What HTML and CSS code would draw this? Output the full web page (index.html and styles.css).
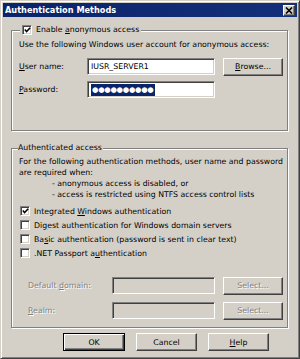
FILE: index.html
```html
<!DOCTYPE html>
<html>
<head>
<meta charset="utf-8">
<link rel="stylesheet" href="styles.css">
</head>
<body>
<div class="window">
  <div class="titlebar">
    <span class="title">Authentication Methods</span>
    <span class="close"><svg width="8" height="7" viewBox="0 0 8 7"><path d="M1 0.5 L7 6.5 M7 0.5 L1 6.5" stroke="#000" stroke-width="1.6"/></svg></span>
  </div>
  <div class="content">
    <fieldset class="group g1">
      <legend class="lg1"><span class="cb"><svg width="7" height="6" viewBox="0 0 7 6"><path d="M0.8 2.6 L2.6 4.6 L6.2 0.8" stroke="#000" stroke-width="1.5" fill="none"/></svg></span><span>Enable <u>a</u>nonymous access</span></legend>
      <p class="line">Use the following Windows user account for anonymous access:</p>
      <div class="row r-user">
        <span class="lbl"><u>U</u>ser name:</span>
        <div class="field">IUSR_SERVER1</div>
        <div class="btn side"><span><u>B</u>rowse...</span></div>
      </div>
      <div class="row r-pass">
        <span class="lbl"><u>P</u>assword:</span>
        <div class="field focus"><span class="sel">●●●●●●●●●●</span></div>
      </div>
    </fieldset>

    <fieldset class="group g2">
      <legend class="lg2">Authenticated access</legend>
      <p class="desc">For the following authentication methods, user name and password<br>are required when:</p>
      <p class="desc indent">- anonymous access is disabled, or<br>- access is restricted using NTFS access control lists</p>
      <div class="checks">
        <div class="check"><span class="cb"><svg width="7" height="6" viewBox="0 0 7 6"><path d="M0.8 2.6 L2.6 4.6 L6.2 0.8" stroke="#000" stroke-width="1.5" fill="none"/></svg></span><span>Integrated <u>W</u>indows authentication</span></div>
        <div class="check"><span class="cb"></span><span>Di<u>g</u>est authentication for Windows domain servers</span></div>
        <div class="check"><span class="cb"></span><span>Ba<u>s</u>ic authentication (password is sent in clear text)</span></div>
        <div class="check"><span class="cb"></span><span>.NET Passport a<u>u</u>thentication</span></div>
      </div>
      <div class="row r-dom disabled">
        <span class="lbl wide">Default <u>d</u>omain:</span>
        <div class="field dis"></div>
        <div class="btn side dis"><span>Select...</span></div>
      </div>
      <div class="row r-realm disabled">
        <span class="lbl wide"><u>R</u>ealm:</span>
        <div class="field dis"></div>
        <div class="btn side dis"><span>Select...</span></div>
      </div>
    </fieldset>

    <div class="actions">
      <div class="btn def"><span>OK</span></div>
      <div class="btn"><span>Cancel</span></div>
      <div class="btn"><span><u>H</u>elp</span></div>
    </div>
  </div>
</div>
</body>
</html>
```

FILE: styles.css
```css
* { box-sizing: border-box; }
html, body { margin: 0; padding: 0; background: #d4d0c8; }
body {
  font-family: "DejaVu Sans", Tahoma, sans-serif;
  font-size: 7.8px;
  color: #000;
}
.window {
  width: 300px;
  height: 359px;
  background: #d4d0c8;
  border: 1px solid;
  border-color: #d4d0c8 #404040 #404040 #d4d0c8;
  box-shadow: inset 1px 1px 0 #fff, inset -1px -1px 0 #808080;
  padding: 2px;
  display: flex;
  flex-direction: column;
}
.titlebar {
  height: 14px;
  background: linear-gradient(to right, #0a246a, #14307a);
  display: flex;
  align-items: center;
  justify-content: space-between;
  padding: 0 2px 0 2px;
}
.title {
  color: #fff;
  font-weight: bold;
  font-size: 8.2px;
  letter-spacing: 0;
}
.close {
  width: 12px;
  height: 11px;
  background: #d4d0c8;
  border: 1px solid;
  border-color: #fff #404040 #404040 #fff;
  box-shadow: inset -1px -1px 0 #808080;
  display: flex;
  align-items: center;
  justify-content: center;
}
.content {
  padding: 7px 8px 0 8px;
  display: flex;
  flex-direction: column;
}
.group {
  margin: 0 1px 0 0;
  border: 1px solid #808080;
  box-shadow: inset 1px 1px 0 #fff, 1px 1px 0 #fff;
  padding: 0 6px 0 7px;
  min-width: 0;
}
.group legend {
  background: #d4d0c8;
  line-height: 12px;
  height: 12px;
  padding: 0 2px;
}
.lg1 {
  display: flex;
  align-items: center;
  gap: 4px;
  margin-left: 1px;
}
.lg2 { margin-left: -1px; padding: 0 1px 0 0 !important; }
.g1 { padding-top: 3px; padding-bottom: 32px; }
.g2 { margin-top: 11px; padding-top: 2px; padding-bottom: 8px; }
p { margin: 0; }
.line { line-height: 12px; height: 12px; white-space: nowrap; }
.desc { line-height: 11px; white-space: nowrap; }
.indent { padding-left: 33px; }
.row {
  display: flex;
  align-items: center;
  height: 17px;
}
.r-user { margin-top: 7px; }
.r-pass { margin-top: 6px; }
.r-dom { margin-top: 17px; }
.r-realm { margin-top: 8px; }
.lbl { width: 68px; flex: none; }
.lbl.wide { width: 93px; padding-left: 9px; }
.field {
  width: 128px;
  height: 17px;
  flex: none;
  background: #fff;
  border: 1px solid;
  border-color: #808080 #fff #fff #808080;
  box-shadow: inset 1px 1px 0 #404040, inset -1px -1px 0 #d4d0c8;
  padding: 0 3px;
  display: flex;
  align-items: center;
}
.field.dis { background: #d4d0c8; width: 103px; }
.sel {
  background: #0a246a;
  color: #fff;
  font-size: 7.4px;
  line-height: 12px;
  letter-spacing: -0.3px;
  padding: 0 1px;
}
.btn {
  width: 61px;
  height: 18px;
  flex: none;
  background: #d4d0c8;
  border: 1px solid;
  border-color: #fff #404040 #404040 #fff;
  box-shadow: inset -1px -1px 0 #808080;
  display: flex;
  align-items: center;
  justify-content: center;
}
.btn.side { margin-left: 8px; width: 60px; }
.disabled .lbl, .btn.dis span {
  color: #808080;
  text-shadow: 1px 1px 0 #fff;
}
.checks { margin-top: 4px; display: flex; flex-direction: column; }
.check {
  height: 14px;
  display: flex;
  align-items: center;
  gap: 4px;
  padding-left: 1px;
  white-space: nowrap;
}
.cb {
  width: 10px;
  height: 10px;
  flex: none;
  background: #fff;
  border: 1px solid;
  border-color: #808080 #fff #fff #808080;
  box-shadow: inset 1px 1px 0 #404040, inset -1px -1px 0 #d4d0c8;
  display: flex;
  align-items: center;
  justify-content: center;
}
.actions {
  margin-top: 5px;
  display: flex;
  gap: 11px;
  padding-left: 52px;
}
.btn.def {
  width: 62px;
  border: 1px solid #000;
  box-shadow: inset 1px 1px 0 #fff, inset -1px -1px 0 #404040, inset -2px -2px 0 #808080;
}
```
